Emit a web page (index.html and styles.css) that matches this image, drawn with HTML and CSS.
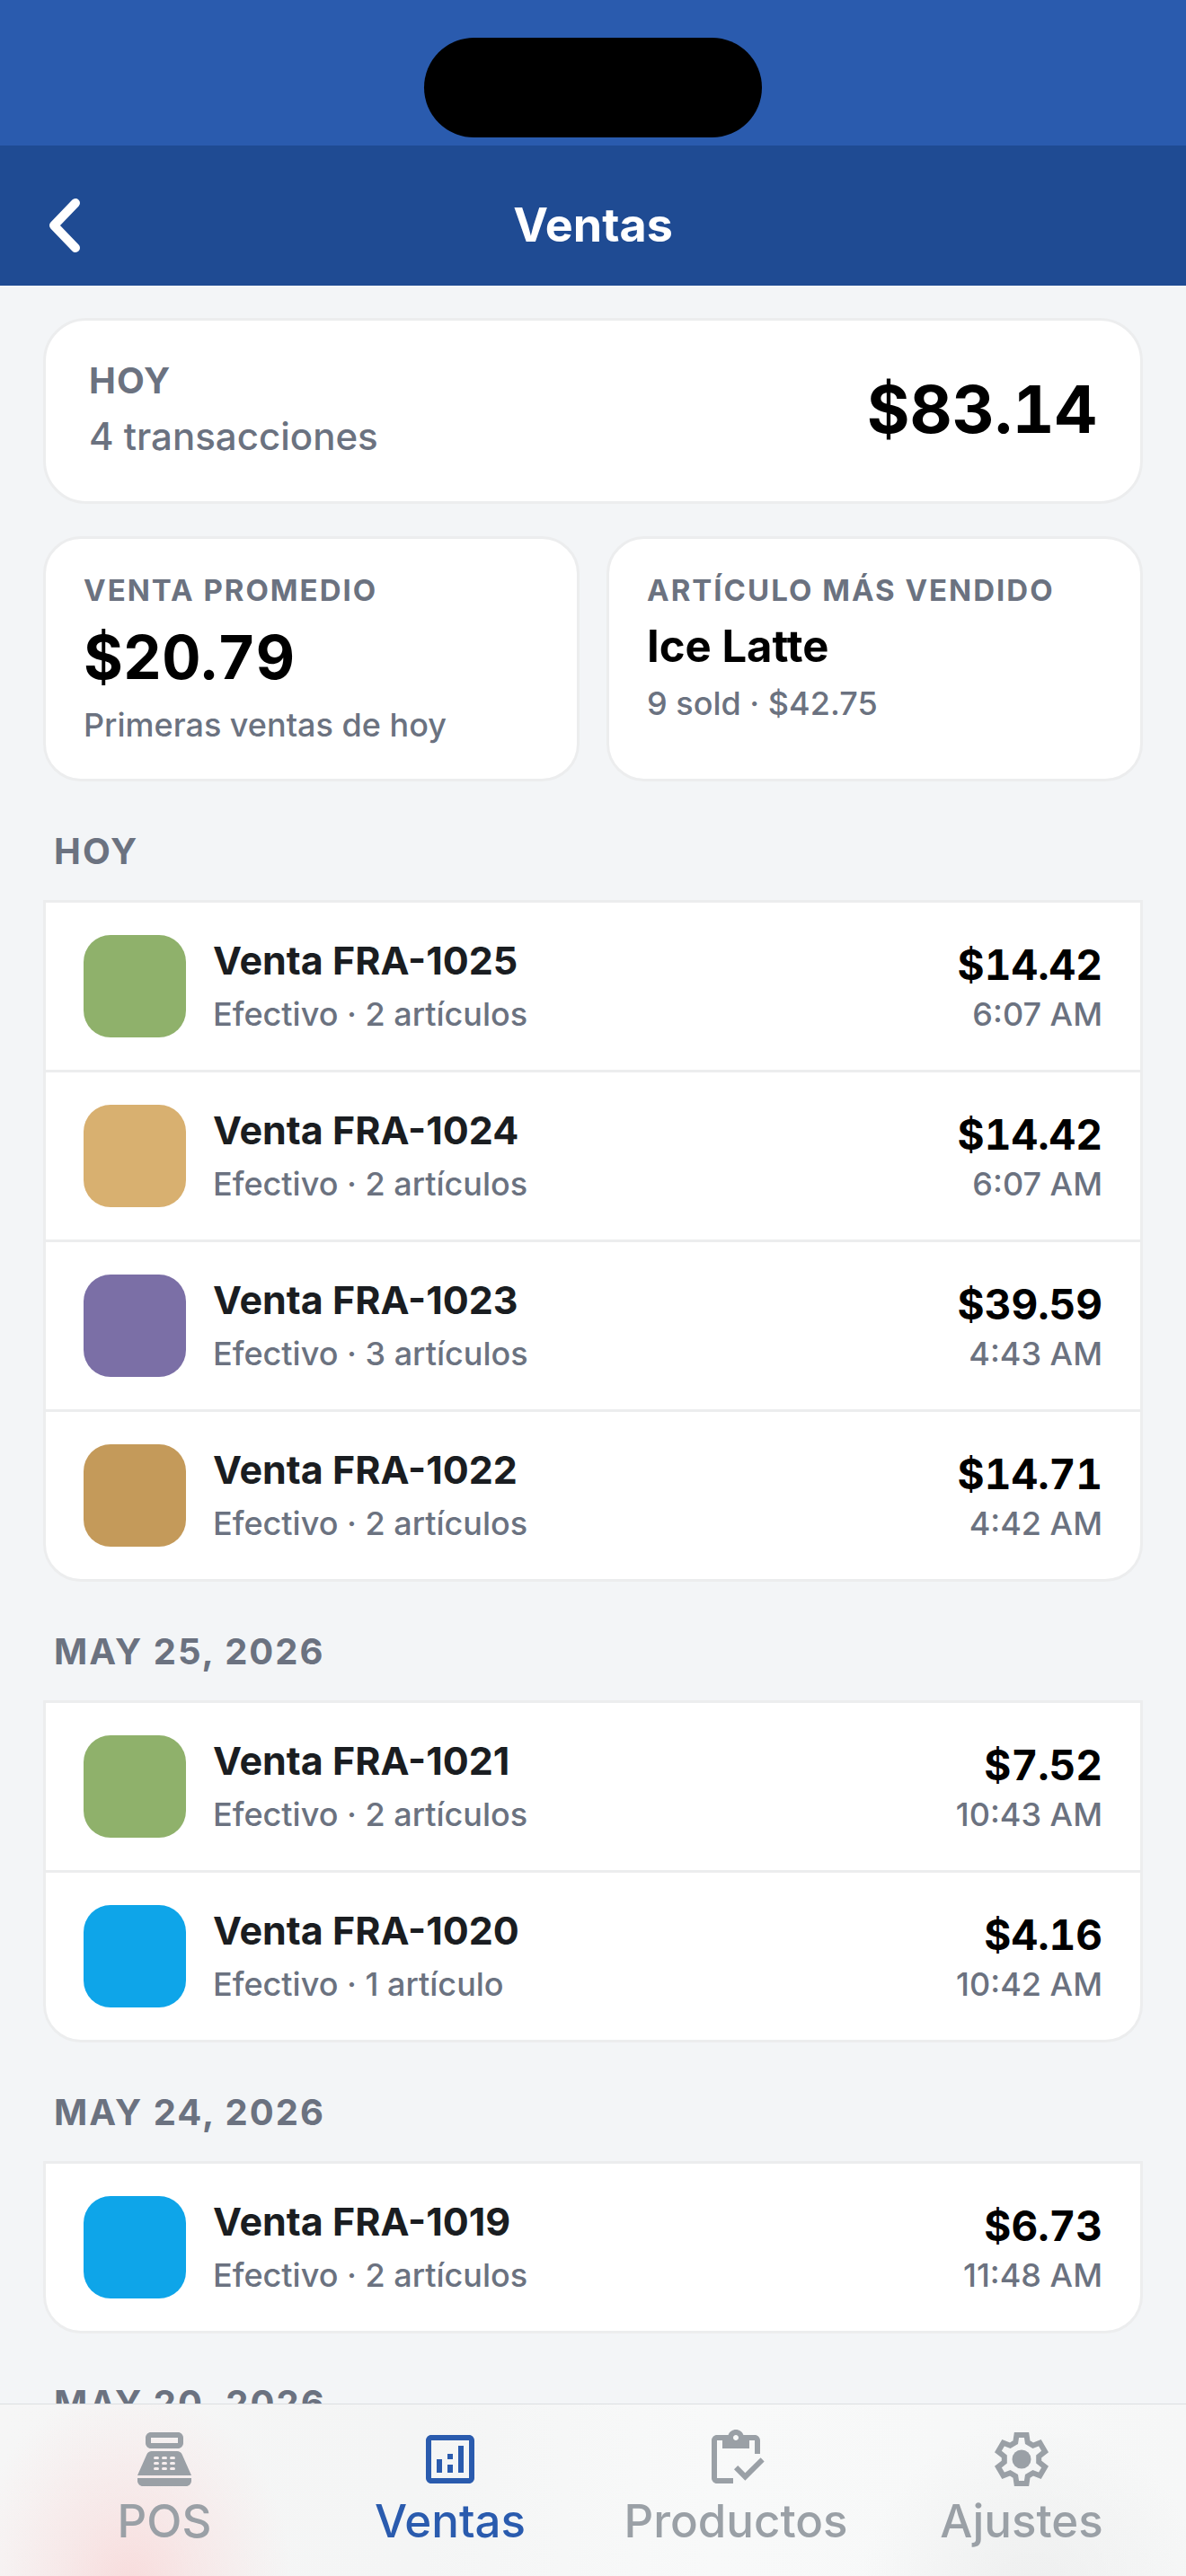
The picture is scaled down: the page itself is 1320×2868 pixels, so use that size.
FILE: index.html
```
<!DOCTYPE html>
<html lang="es">
<head>
    <meta charset="UTF-8">
    <meta name="viewport" content="width=device-width, initial-scale=1.0">
    <title>Ventas</title>
    <link rel="stylesheet" href="styles.css">
</head>
<body>
    <div class="status-bar">
        <div class="island"></div>
    </div>

    <header class="header">
        <button class="back" type="button" aria-label="Volver">
            <svg class="back-icon" viewBox="0 0 36 60"><path d="M30 5 6 30l24 25"/></svg>
        </button>
        <h1>Ventas</h1>
    </header>

    <main class="content">
        <section class="card total-card">
            <div class="total-info">
                <h2 class="total-label">HOY</h2>
                <p class="total-count">4 transacciones</p>
            </div>
            <p class="total-amount">$83.14</p>
        </section>

        <div class="stats">
            <section class="card stat-card">
                <h2 class="stat-label">VENTA PROMEDIO</h2>
                <p class="stat-value">$20.79</p>
                <p class="stat-note">Primeras ventas de hoy</p>
            </section>
            <section class="card stat-card">
                <h2 class="stat-label">ARTÍCULO MÁS VENDIDO</h2>
                <p class="stat-name">Ice Latte</p>
                <p class="stat-note">9 sold · $42.75</p>
            </section>
        </div>

        <h2 class="day">HOY</h2>
        <ul class="sales">
            <li class="sale">
                <span class="swatch green"></span>
                <div class="sale-info">
                    <h3>Venta FRA-1025</h3>
                    <p>Efectivo · 2 artículos</p>
                </div>
                <div class="sale-total">
                    <strong>$14.42</strong>
                    <time>6:07 AM</time>
                </div>
            </li>
            <li class="sale">
                <span class="swatch sand"></span>
                <div class="sale-info">
                    <h3>Venta FRA-1024</h3>
                    <p>Efectivo · 2 artículos</p>
                </div>
                <div class="sale-total">
                    <strong>$14.42</strong>
                    <time>6:07 AM</time>
                </div>
            </li>
            <li class="sale">
                <span class="swatch purple"></span>
                <div class="sale-info">
                    <h3>Venta FRA-1023</h3>
                    <p>Efectivo · 3 artículos</p>
                </div>
                <div class="sale-total">
                    <strong>$39.59</strong>
                    <time>4:43 AM</time>
                </div>
            </li>
            <li class="sale">
                <span class="swatch caramel"></span>
                <div class="sale-info">
                    <h3>Venta FRA-1022</h3>
                    <p>Efectivo · 2 artículos</p>
                </div>
                <div class="sale-total">
                    <strong>$14.71</strong>
                    <time>4:42 AM</time>
                </div>
            </li>
        </ul>

        <h2 class="day">MAY 25, 2026</h2>
        <ul class="sales">
            <li class="sale">
                <span class="swatch green"></span>
                <div class="sale-info">
                    <h3>Venta FRA-1021</h3>
                    <p>Efectivo · 2 artículos</p>
                </div>
                <div class="sale-total">
                    <strong>$7.52</strong>
                    <time>10:43 AM</time>
                </div>
            </li>
            <li class="sale">
                <span class="swatch blue"></span>
                <div class="sale-info">
                    <h3>Venta FRA-1020</h3>
                    <p>Efectivo · 1 artículo</p>
                </div>
                <div class="sale-total">
                    <strong>$4.16</strong>
                    <time>10:42 AM</time>
                </div>
            </li>
        </ul>

        <h2 class="day">MAY 24, 2026</h2>
        <ul class="sales">
            <li class="sale">
                <span class="swatch blue"></span>
                <div class="sale-info">
                    <h3>Venta FRA-1019</h3>
                    <p>Efectivo · 2 artículos</p>
                </div>
                <div class="sale-total">
                    <strong>$6.73</strong>
                    <time>11:48 AM</time>
                </div>
            </li>
        </ul>

        <h2 class="day">MAY 20, 2026</h2>
    </main>

    <nav class="tabs">
        <a class="tab" href="#pos">
            <svg class="tab-icon" viewBox="0 0 24 24">
                <path fill-rule="evenodd" d="M17 2H7c-1.1 0-2 .9-2 2v2c0 1.1.9 2 2 2h10c1.1 0 2-.9 2-2V4c0-1.1-.9-2-2-2zm0 4H7V4h10v2z"/>
                <path d="M20 22H4c-1.1 0-2-.9-2-2v-1h20v1c0 1.1-.9 2-2 2z"/>
                <path fill-rule="evenodd" d="M18.53 10.19C18.21 9.47 17.49 9 16.7 9H7.3c-.79 0-1.51.47-1.83 1.19L2 18h20l-3.47-7.81zM8.5 11h1a.5.5 0 0 1 0 1h-1a.5.5 0 0 1 0-1zm3 0h1a.5.5 0 0 1 0 1h-1a.5.5 0 0 1 0-1zm3 0h1a.5.5 0 0 1 0 1h-1a.5.5 0 0 1 0-1zm-6 2h1a.5.5 0 0 1 0 1h-1a.5.5 0 0 1 0-1zm3 0h1a.5.5 0 0 1 0 1h-1a.5.5 0 0 1 0-1zm3 0h1a.5.5 0 0 1 0 1h-1a.5.5 0 0 1 0-1zm-6 2h1a.5.5 0 0 1 0 1h-1a.5.5 0 0 1 0-1zm3 0h1a.5.5 0 0 1 0 1h-1a.5.5 0 0 1 0-1zm3 0h1a.5.5 0 0 1 0 1h-1a.5.5 0 0 1 0-1z"/>
            </svg>
            POS
        </a>
        <a class="tab active" href="#ventas" aria-current="page">
            <svg class="tab-icon" viewBox="0 0 24 24">
                <path d="M19 3H5c-1.1 0-2 .9-2 2v14c0 1.1.9 2 2 2h14c1.1 0 2-.9 2-2V5c0-1.1-.9-2-2-2zm0 16H5V5h14v14z"/>
                <path d="M7 12h2v5H7zM15 7h2v10h-2zM11 14h2v3h-2zM11 10h2v2h-2z"/>
            </svg>
            Ventas
        </a>
        <a class="tab" href="#productos">
            <svg class="tab-icon" viewBox="0 0 24 24">
                <path d="M5 5h2v3h10V5h2v5h2V5c0-1.1-.9-2-2-2h-4.18C14.4 1.84 13.3 1 12 1s-2.4.84-2.82 2H5c-1.1 0-2 .9-2 2v14c0 1.1.9 2 2 2h6v-2H5V5zm7-2c.55 0 1 .45 1 1s-.45 1-1 1-1-.45-1-1 .45-1 1-1z"/>
                <path d="M21.2 11.4l-5.75 5.7-2.7-2.75-1.42 1.42 4.12 4.18 7.1-7.1z"/>
            </svg>
            Productos
        </a>
        <a class="tab" href="#ajustes">
            <svg class="tab-icon" viewBox="0 0 24 24">
                <path class="gear" d="M10.15 3h3.7l.4 2.7 2 1.2 2.55-1 1.9 3.25-2.3 1.8v2.1l2.3 1.8-1.9 3.25-2.55-1-2 1.2-.4 2.7h-3.7l-.4-2.7-2-1.2-2.55 1-1.9-3.25 2.3-1.8v-2.1l-2.3-1.8 1.9-3.25 2.55 1 2-1.2z"/>
                <circle cx="12" cy="12" r="3.5"/>
            </svg>
            Ajustes
        </a>
    </nav>
</body>
</html>
```
FILE: styles.css
```
* {
    box-sizing: border-box;
}

/* Body and General Styling */
body {
    font-family: Inter, 'Liberation Sans', sans-serif;
    margin: 0;
    display: flex;
    flex-direction: column;
    height: 100vh;
    background: #F3F5F7;
    color: #000;
}

h1, h2, h3, p, ul {
    margin: 0;
    padding: 0;
}

/* Status Bar */
.status-bar {
    display: flex;
    justify-content: center;
    padding: 42px 0 9px;
    background: #2A5BAE;
}

.island {
    width: 376px;
    height: 111px;
    border-radius: 56px;
    background: #000;
}

/* Header */
.header {
    display: grid;
    grid-template-columns: 1fr auto 1fr;
    align-items: center;
    padding: 32px 54px 10px;
    background: #1F4B93;
    color: white;
}

.header h1 {
    font-size: 52px;
    font-weight: 700;
    line-height: 60px;
}

.back {
    display: flex;
    align-items: center;
    justify-self: start;
    height: 114px;
    padding: 0;
    background: none;
    border: none;
    cursor: pointer;
}

.back-icon {
    width: 36px;
    height: 60px;
    fill: none;
    stroke: white;
    stroke-width: 10;
    stroke-linecap: round;
    stroke-linejoin: round;
}

/* Main Content */
.content {
    flex: 1;
    min-height: 0;
    padding: 36px 48px 0;
    overflow-y: auto;
    scrollbar-width: none;
}

.card {
    background: white;
    border: 3px solid #ECEDEE;
    border-radius: 48px;
}

.total-card {
    display: flex;
    justify-content: space-between;
    align-items: center;
    padding: 43px 48px 47px;
    margin-bottom: 36px;
}

.total-info {
    display: flex;
    flex-direction: column;
    gap: 12px;
    color: #6B7280;
}

.total-label {
    font-size: 40px;
    font-weight: 700;
    line-height: 48px;
    letter-spacing: 1px;
}

.total-count {
    font-size: 42px;
    font-weight: 500;
    line-height: 51px;
}

.total-amount {
    font-size: 73px;
    font-weight: 700;
    line-height: 87px;
    font-variant-numeric: tabular-nums;
}

.stats {
    display: grid;
    grid-template-columns: 1fr 1fr;
    gap: 30px;
}

.stat-card {
    display: flex;
    flex-direction: column;
    gap: 12px;
    padding: 36px 42px 39px;
    border-radius: 42px;
}

.stat-label {
    font-size: 33px;
    font-weight: 700;
    line-height: 42px;
    letter-spacing: 2px;
    color: #6B7280;
}

.stat-value {
    font-size: 67px;
    font-weight: 700;
    line-height: 84px;
    font-variant-numeric: tabular-nums;
}

.stat-name {
    font-size: 49px;
    font-weight: 700;
    line-height: 60px;
}

.stat-note {
    font-size: 36px;
    font-weight: 500;
    line-height: 42px;
    color: #6B7280;
}

/* Sales grouped by day */
.day {
    padding: 54px 12px 30px;
    font-size: 40px;
    font-weight: 700;
    line-height: 48px;
    letter-spacing: 2px;
    color: #6B7280;
}

.sales {
    list-style: none;
    background: white;
    border: 3px solid #ECEDEE;
    border-radius: 0 0 42px 42px;
}

.sale {
    display: flex;
    align-items: center;
    gap: 30px;
    padding: 36px 42px;
}

.sale + .sale {
    border-top: 3px solid #ECEDEE;
}

.swatch {
    width: 114px;
    height: 114px;
    border-radius: 30px;
}

.green { background: #8FB16B; }
.sand { background: #D8B070; }
.purple { background: #7B6FA6; }
.caramel { background: #C49A5A; }
.blue { background: #0EA5E9; }

.sale-info {
    display: flex;
    flex: 1;
    flex-direction: column;
    gap: 12px;
}

.sale-info h3 {
    font-size: 43px;
    font-weight: 700;
    line-height: 51px;
    color: #1A1D21;
}

.sale-info p,
.sale-total time {
    font-size: 36px;
    font-weight: 500;
    line-height: 45px;
    color: #6B7280;
}

.sale-total {
    display: flex;
    flex-direction: column;
    align-items: flex-end;
    gap: 6px;
    padding-top: 3px;
}

.sale-total strong {
    font-size: 46px;
    font-weight: 700;
    line-height: 54px;
    font-variant-numeric: tabular-nums;
}

/* Bottom Tabs */
.tabs {
    display: grid;
    grid-template-columns: repeat(4, 1fr);
    padding: 25px 24px 31px;
    border-top: 1px solid #DCDFE1;
    background:
        radial-gradient(ellipse 180px 220px at 11% 105%, #F8DCDC 0, #F8DCDC88 40%, #F8DCDC33 75%, #F8DCDC00 100%),
        radial-gradient(circle at 87% 110%, #EEEFEF 0, #EEEFEF00 190px),
        linear-gradient(90deg, #F6F6F6, #F4F5F5 35%, #F8F9F9 60%, #F6F7F7);
}

.tab {
    display: flex;
    flex-direction: column;
    align-items: center;
    gap: 3px;
    font-size: 51px;
    font-weight: 500;
    line-height: 60px;
    color: #9AA0A6;
    text-decoration: none;
}

.tab.active {
    color: #2A5BAE;
}

.tab-icon {
    width: 72px;
    height: 72px;
    fill: currentColor;
}

.gear {
    fill: none;
    stroke: currentColor;
    stroke-width: 2;
}
```
